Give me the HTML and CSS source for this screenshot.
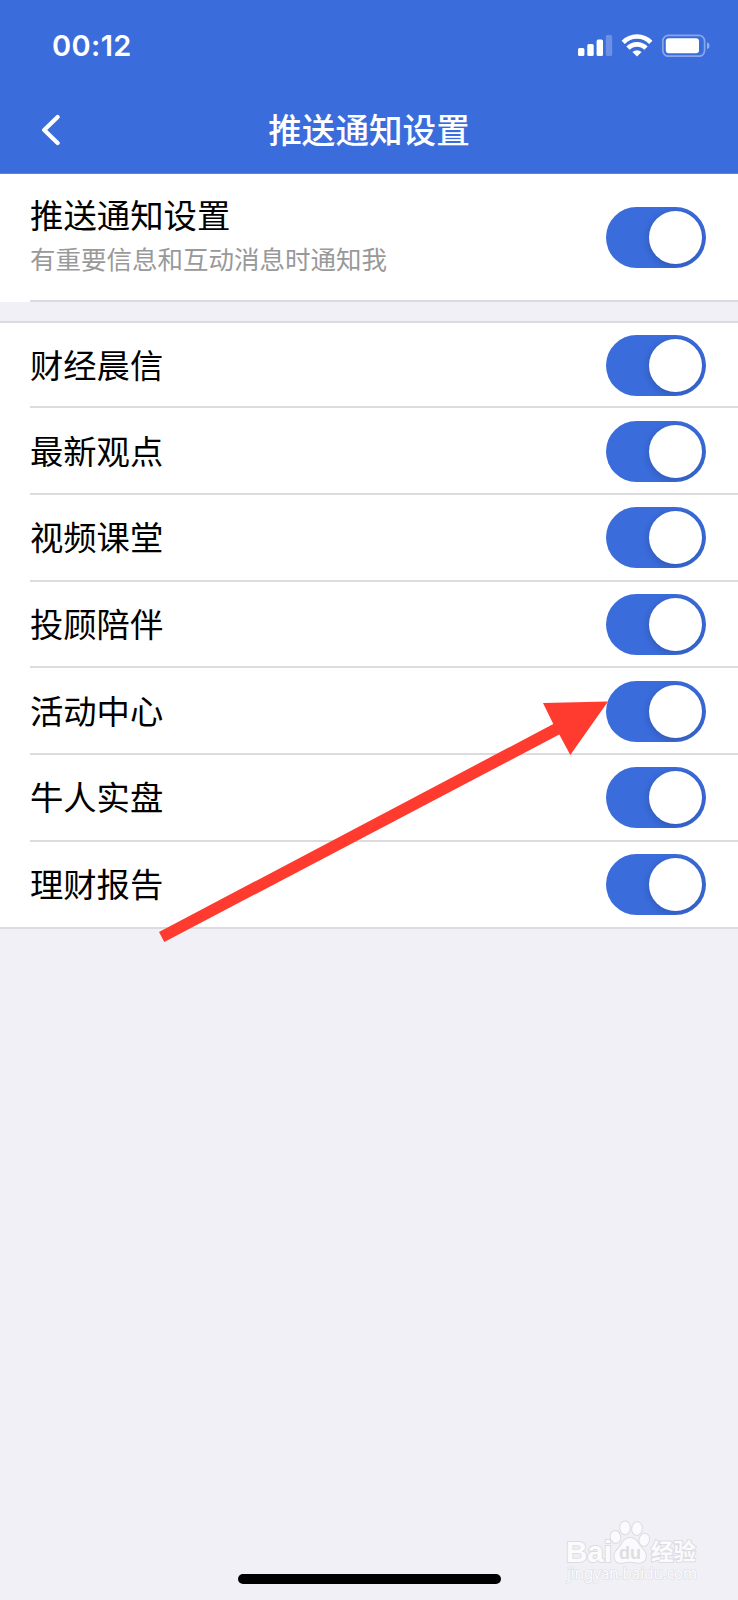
FILE: index.html
```html
<!DOCTYPE html>
<html lang="zh-CN">
<head>
  <meta charset="UTF-8" />
  <meta name="viewport" content="width=device-width, initial-scale=1.0"/>
  <title>推送通知设置</title>
  <link rel="stylesheet" href="styles.css">
</head>
<body>

  <div class="screen">
    <header class="header">
      <div class="status-bar">
        <span class="time">00:12</span>
        <svg class="status-icons" width="132" height="24" viewBox="0 0 132 24" fill="#fff">
          <!-- signal -->
          <rect x="0" y="14" width="6.4" height="8" rx="1.5"/>
          <rect x="9.3" y="10" width="6.4" height="12" rx="1.5"/>
          <rect x="18.6" y="5.5" width="6.4" height="16.5" rx="1.5"/>
          <rect x="27.8" y="1" width="6.4" height="21" rx="1.5" opacity=".25"/>
          <!-- wifi -->
          <g fill="none" stroke="#fff" stroke-width="4.6">
            <path d="M45.2 8.3A19.2 19.2 0 0 1 72.8 8.3"/>
            <path d="M50 14.2A12.4 12.4 0 0 1 68 14.2"/>
          </g>
          <path d="M54.4 18Q59 14.3 63.6 18L59 22.5Z"/>
          <!-- battery -->
          <rect x="84.8" y="1.4" width="41.8" height="20.8" rx="5.6" fill="none" stroke="#fff" stroke-width="1.7" opacity=".4"/>
          <rect x="87.8" y="4.2" width="33.2" height="15" rx="3"/>
          <path d="M129 8.2Q131.6 9 131.6 11.7Q131.6 14.4 129 15.2Z" opacity=".45"/>
        </svg>
      </div>
      <div class="nav-bar">
        <svg class="back" width="20" height="32" viewBox="0 0 20 32">
          <path d="M17.6 3L4.2 16L17.6 29" fill="none" stroke="#fff" stroke-width="4.2" stroke-linecap="round" stroke-linejoin="round"/>
        </svg>
        <h1>推送通知设置</h1>
      </div>
    </header>

    <section class="master">
      <div class="master-row">
        <div class="text">
          <h2>推送通知设置</h2>
          <p>有重要信息和互动消息时通知我</p>
        </div>
        <span class="switch"></span>
      </div>
    </section>

    <ul class="list">
      <li><span class="label">财经晨信</span><span class="switch"></span></li>
      <li><span class="label">最新观点</span><span class="switch"></span></li>
      <li><span class="label">视频课堂</span><span class="switch"></span></li>
      <li><span class="label">投顾陪伴</span><span class="switch"></span></li>
      <li><span class="label">活动中心</span><span class="switch"></span></li>
      <li><span class="label">牛人实盘</span><span class="switch"></span></li>
      <li><span class="label">理财报告</span><span class="switch"></span></li>
    </ul>

    <footer class="footer">
      <svg class="watermark" width="140" height="70" viewBox="0 0 140 70">
        <g fill="#fbfbfd" stroke="#dcdce1" stroke-width="2" paint-order="stroke">
          <text class="brand" x="4" y="41.5" textLength="46" lengthAdjust="spacingAndGlyphs">Bai</text>
          <ellipse cx="53.5" cy="17" rx="4.8" ry="6" transform="rotate(-12 53.5 17)"/>
          <ellipse cx="63" cy="7.8" rx="4.8" ry="6.4"/>
          <ellipse cx="75" cy="8.6" rx="4.8" ry="6.4" transform="rotate(8 75 8.6)"/>
          <ellipse cx="82.3" cy="19.8" rx="4.8" ry="6" transform="rotate(12 82.3 19.8)"/>
          <path d="M68 18C73 18 75.5 22 78 26C81 30 84.5 32 83.8 37C83 42.5 78 43.5 74 42.5C70 41.6 66 41.6 62 42.5C57 43.5 53 42 52.4 37C52 32 55.5 30 58.5 26C61 22 63 18 68 18Z"/>
          <text class="cjk" x="89" y="39.5" textLength="45">经验</text>
          <text class="url" x="5" y="58.5" textLength="130" lengthAdjust="spacingAndGlyphs">jingyan.baidu.com</text>
        </g>
        <text class="du" x="57" y="39" textLength="22" lengthAdjust="spacingAndGlyphs">du</text>
      </svg>
      <div class="home-bar"></div>
    </footer>

    <svg class="arrow" width="738" height="1600" viewBox="0 0 738 1600">
      <path d="M159 932L553.3 724L543 703L608 701.5L570.3 755L559.3 734.5L164.3 942Z" fill="#ff3b30"/>
    </svg>
  </div>

</body>
</html>
```

FILE: styles.css
```css
* {
  box-sizing: border-box;
}

body {
  margin: 0;
  font-family: 'Noto Sans CJK SC', sans-serif;
  background-color: #f1f0f6;
  color: #000;
}

.screen {
  position: relative;
  display: flex;
  flex-direction: column;
  width: 738px;
  height: 1600px;
  overflow: hidden;
}

.header {
  height: 174px;
  background-color: #3a6cdc;
  border-bottom: 1px solid #5f83cf;
  color: #fff;
}

.status-bar {
  display: flex;
  justify-content: space-between;
  align-items: center;
  height: 91px;
  padding: 0 28px 0 52px;
}

.time {
  font-family: 'Inter', sans-serif;
  font-size: 29px;
  font-weight: 600;
  letter-spacing: 0.4px;
}

.nav-bar {
  display: grid;
  grid-template-columns: 60px 1fr 60px;
  align-items: center;
  height: 78px;
}

.back {
  justify-self: end;
}

h1 {
  margin: 0;
  padding-bottom: 2px;
  font-size: 33.6px;
  font-weight: 500;
  line-height: 40px;
  text-align: center;
}

.master {
  height: 128px;
  padding-left: 30px;
  background-color: #fff;
}

.master-row {
  display: flex;
  justify-content: space-between;
  align-items: center;
  height: 128px;
  padding-right: 32px;
  border-bottom: 2px solid #dcdce0;
}

.text {
  padding-bottom: 5px;
}

h2 {
  margin: 0;
  font-size: 33.4px;
  font-weight: 400;
  line-height: 46px;
}

p {
  margin: 0;
  font-size: 25.5px;
  font-weight: 400;
  line-height: 42px;
  color: #999;
}

.list {
  margin: 19px 0 0;
  padding: 0 0 0 30px;
  list-style: none;
  background-color: #fff;
  border-top: 2px solid #dcdce0;
  border-bottom: 2px solid #dcdce0;
}

.list li {
  display: flex;
  justify-content: space-between;
  align-items: center;
  height: 86.7px;
  padding: 1px 32px 0 0;
  border-bottom: 2px solid #dcdce0;
}

.list li:first-child {
  height: 85.4px;
}

.list li:last-child {
  height: 84.7px;
  border-bottom: none;
}

.label {
  padding-bottom: 4px;
  font-size: 33.3px;
}

.switch {
  width: 100px;
  height: 61px;
  padding: 4px;
  border-radius: 31px;
  background-color: #3a6cdc;
  overflow: hidden;
}

.switch::after {
  content: "";
  display: block;
  width: 53px;
  height: 53px;
  margin-left: 39px;
  border-radius: 50%;
  background-color: #fff;
  box-shadow: 0 2px 8px rgba(0, 0, 0, 0.2);
}

.footer {
  display: flex;
  flex-direction: column;
  align-items: center;
  margin-top: auto;
  padding-bottom: 16px;
}

.watermark {
  align-self: flex-end;
  margin-right: 36px;
  margin-bottom: -16px;
}

.brand {
  font: bold 30px 'Liberation Sans', sans-serif;
}

.cjk {
  font: bold 22.5px 'Noto Sans CJK SC', sans-serif;
}

.url {
  font: 15.5px 'Noto Sans', sans-serif;
  stroke-width: 1.2;
}

.du {
  font: bold 19px 'Liberation Sans', sans-serif;
  fill: #dddde2;
}

.home-bar {
  width: 263px;
  height: 10px;
  border-radius: 5px;
  background-color: #000;
}

.arrow {
  position: absolute;
  top: 0;
  left: 0;
}
```
